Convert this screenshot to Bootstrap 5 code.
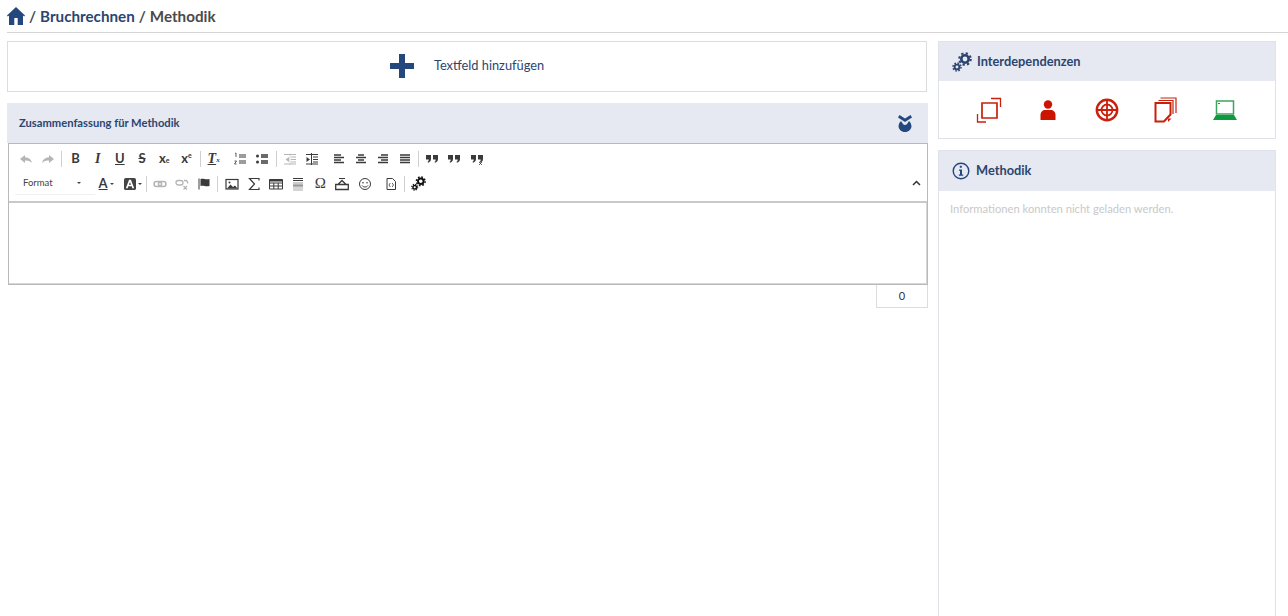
<!DOCTYPE html>
<html lang="de">
  <head>
    <title>Methodik</title>
    <link href="https://cdn.jsdelivr.net/npm/bootstrap@5.3.3/dist/css/bootstrap.min.css" rel="stylesheet" />
    <style>
      html, body { height: 616px; overflow: hidden; }
      body { font-family: Lato, "Liberation Sans", sans-serif; color: #444; background: #fff; }
      .crumb-bar { height: 33px; margin-left: 7px; border-bottom: 1px solid #d5d5d5; font-size: 15.2px; font-weight: 700; gap: 4px; color: #4a4a4a; }
      .crumb-bar a { color: #2b4570; text-decoration: none; }
      .page-wrap { padding: 8px 12px 0 7px; gap: 10px; }
      .left-col { width: 921px; }
      .right-col { width: 338px; }
      .add-box { height: 51px; width: 920px; border: 1px solid #dcdcdc; color: #2b4570; font-size: 12.8px; gap: 20px; padding: 0 0 2px 0; }
      .panel-box { border: 1px solid #dfe2e8; }
      .panel-head { background: #e6e9f1; color: #2b4570; font-weight: 700; }
      .sum-head { height: 40px; padding: 0 16px 0 12px; font-size: 11.2px; margin-top: 11px; }
      .editor-box { border: 1px solid #b9b9b9; margin-left: 1px; width: 920px; }
      .editor-tools { height: 59px; padding: 2px 6px 0 6px; border-bottom: 2px solid #c9c9c9; position: relative; }
      .tool-row { height: 25px; }
      .tool-btn { width: 22.2px; height: 22px; flex: none; color: #3a3a3a; font-size: 13px; line-height: 1; font-weight: 700; }
      .tool-btn svg { display: block; }
      .tool-off { color: #b5b5b5; }
      .tool-sep { width: 1px; height: 16px; background: #d0d0d0; margin: 0 2px; flex: none; }
      .tool-gap { margin-left: 4.5px; }
      .tool-format { width: 80px; height: 22px; font-size: 9.5px; padding-left: 8px; color: #444; flex: none; border-bottom: 1px solid #f0f0f0; }
      .tool-format i { border-left: 2px solid transparent; border-right: 2px solid transparent; border-top: 2px solid #444; margin-left: auto; margin-right: 14px; }
      .tool-caret { border-left: 2px solid transparent; border-right: 2px solid transparent; border-top: 2px solid #444; margin-left: 2px; }
      .tool-collapse { position: absolute; right: 6px; top: 36px; color: #333; }
      .tool-italic { font-family: "Liberation Serif", serif; font-size: 14px; }
      .tool-omega { font-family: "Liberation Serif", serif; font-size: 15px; font-weight: 400; }
      .sub-mark { font-size: 7px; }
      .gear-dark { color: #111; }
      .gear-head { color: #2b4570; }
      .editor-area { height: 81px; box-shadow: inset -1px -1px 0 #d8d8d8; }
      .count-box { width: 52px; height: 23px; border: 1px solid #dcdcdc; border-top: 0; font-size: 11px; color: #333; margin-left: 869px; }
      .side-head { height: 39px; padding-left: 13px; gap: 5px; font-size: 12.8px; }
      .info-head { height: 40px; gap: 6px; }
      .dep-icons { height: 57px; }
      .dep-slot { width: 59px; }
      .info-box { margin-top: 11px; height: 480px; }
      .info-text { font-size: 11.2px; color: #c9c9c9; padding: 10px 11px; }
    </style>
  </head>
  <body>
    <svg width="0" height="0" class="position-absolute">
      <symbol id="i-undo" viewBox="0 0 14 14"><path fill="currentColor" d="M6 3 1 7l5 4V8.5c3 0 5 .6 7 2.500-.6-3.500-3-5.500-7-5.800z"/></symbol>
      <symbol id="i-redo" viewBox="0 0 14 14"><path fill="currentColor" d="m8 3 5 4-5 4V8.500c-3 0-5 .6-7 2.500 .6-3.500 3-5.500 7-5.800z"/></symbol>
      <symbol id="i-ol" viewBox="0 0 14 14"><path fill="none" stroke="currentColor" stroke-width="1.200" d="M6 3h7M6 5h7M6 9h7M6 11h7"/><path fill="none" stroke="currentColor" stroke-width=".8" d="M2 1.500 3 1v4M1.500 9h2l-2 3h2"/></symbol>
      <symbol id="i-ul" viewBox="0 0 14 14"><circle cx="2.500" cy="4" r="1.500" fill="currentColor"/><circle cx="2.500" cy="10" r="1.500" fill="currentColor"/><path stroke="currentColor" stroke-width="1.300" d="M6 3h7M6 5h7M6 9h7M6 11h7"/></symbol>
      <symbol id="i-out" viewBox="0 0 14 14"><path stroke="currentColor" d="M7 1.500V13" opacity=".5"/><path stroke="currentColor" d="M1 2.500h12M8 5h5M8 7.500h5M8 10h5M1 12h12"/><path fill="currentColor" d="M6 5v5L2.500 7.500z"/></symbol>
      <symbol id="i-in" viewBox="0 0 14 14"><path stroke="currentColor" d="M8 5h5M8 7.500h5M8 10h5M1 2.500h12M1 12h12M6.500 1v12"/><path fill="currentColor" d="M1.500 5v5L5 7.500z"/></symbol>
      <symbol id="i-left" viewBox="0 0 14 14"><path stroke="currentColor" stroke-width="1.300" d="M2 3h7M2 5.500h10M2 8h7M2 10.500h10"/></symbol>
      <symbol id="i-center" viewBox="0 0 14 14"><path stroke="currentColor" stroke-width="1.300" d="M4 3h6M2 5.500h10M4 8h6M2 10.500h10"/></symbol>
      <symbol id="i-right" viewBox="0 0 14 14"><path stroke="currentColor" stroke-width="1.300" d="M5 3h7M2 5.500h10M5 8h7M2 10.500h10"/></symbol>
      <symbol id="i-just" viewBox="0 0 14 14"><path stroke="currentColor" stroke-width="1.300" d="M2 3h10M2 5.500h10M2 8h10M2 10.500h10"/></symbol>
      <symbol id="i-quote" viewBox="0 0 14 14"><path fill="currentColor" d="M1 3h5v4c0 2-1.500 3.500-3 3.800l-.5-1c.9-.3 1.200-1.300 1.200-2.300H1zM8 3h5v4c0 2-1.500 3.500-3 3.800l-.5-1c.9-.3 1.200-1.300 1.200-2.300H8z"/></symbol>
      <symbol id="i-quote2" viewBox="0 0 14 14"><path fill="currentColor" d="M1 3h5v4c0 2-1.500 3.500-3 3.800l-.5-1c.9-.3 1.200-1.300 1.200-2.300H1zM8 3h5v4c0 2-1.500 3.500-3 3.800l-.5-1c.9-.3 1.200-1.300 1.200-2.300H8z"/><path stroke="#fff" d="M6.800 3v8"/><path stroke="currentColor" stroke-width=".8" d="m9 10 3 3M12 10l-3 3"/></symbol>
      <symbol id="i-link" viewBox="0 0 14 14"><rect x="1" y="4.500" width="7.500" height="5" rx="2.500" fill="none" stroke="currentColor" stroke-width="1.500"/><rect x="5.500" y="4.500" width="7.500" height="5" rx="2.500" fill="none" stroke="currentColor" stroke-width="1.500"/></symbol>
      <symbol id="i-unlink" viewBox="0 0 14 14"><rect x="1" y="3.500" width="7" height="4.500" rx="2.200" fill="none" stroke="currentColor" stroke-width="1.300"/><path fill="none" stroke="currentColor" stroke-width="1.300" d="M9 3.500h1.500a2.200 2.200 0 0 1 2 3M8.500 9l3.500 3.500M12 9l-3.500 3.500"/></symbol>
      <symbol id="i-flag" viewBox="0 0 14 14"><path fill="currentColor" d="M1.500 1.500h1v11h-1zM3.500 2c3-1 5 1 9 0v7c-4 1-6-1-9 0z"/></symbol>
      <symbol id="i-image" viewBox="0 0 14 14"><rect x="1" y="2.500" width="12" height="9.500" fill="none" stroke="currentColor" stroke-width="1.200"/><path fill="currentColor" d="m2 11.500 3.500-4 2.500 2.500 2-1.500 2.500 3z"/><circle cx="4.500" cy="5.500" r="1" fill="currentColor"/></symbol>
      <symbol id="i-sigma" viewBox="0 0 14 14"><path fill="none" stroke="currentColor" stroke-width="1.200" d="M12 3.500V1.500H2.500L7.500 7l-5 5.500H12v-2"/></symbol>
      <symbol id="i-table" viewBox="0 0 14 14"><path fill="none" stroke="currentColor" d="M.5 2.500h13v9.500H.5zM.5 6h13M.5 9h13M4.800 6v6M9.200 6v6"/><path stroke="currentColor" stroke-width="2" d="M.5 3.500h13"/></symbol>
      <symbol id="i-hr" viewBox="0 0 14 14"><path stroke="currentColor" d="M2 1.500h10M2 3.500h10"/><path stroke="#999" d="M2 6h10"/><path stroke="#999" stroke-width="2.400" d="M2 8.500h10"/><path stroke="#aaa" d="M2 11h10M2 13h10"/></symbol>
      <symbol id="i-box" viewBox="0 0 14 14"><path fill="none" stroke="currentColor" stroke-width="1.300" d="M.7 7.500h12.600v5H.7zM3 7.500l4-4 4 4"/><path stroke="currentColor" d="M4 1.500h6"/></symbol>
      <symbol id="i-smile" viewBox="0 0 14 14"><circle cx="7" cy="7" r="5.500" fill="none" stroke="currentColor"/><circle cx="5" cy="5.700" r=".8" fill="currentColor"/><circle cx="9" cy="5.700" r=".8" fill="currentColor"/><path fill="none" stroke="currentColor" d="M4 8.500c1.500 2 4.500 2 6 0"/></symbol>
      <symbol id="i-src" viewBox="0 0 14 14"><path fill="none" stroke="currentColor" d="M3 1.500h5.500l3 3v8H3z"/><path fill="none" stroke="currentColor" stroke-width=".8" d="M6.300 6 5 8l1.300 2M8.200 6l1.300 2-1.300 2"/></symbol>
      <symbol id="i-gears" viewBox="0 0 20 20">
        <g fill="none" stroke="currentColor">
          <circle cx="13" cy="7" r="3.700" stroke-width="2.600"/>
          <circle cx="13" cy="7" r="5.800" stroke-width="2" stroke-dasharray="2.300 2.250"/>
          <circle cx="5" cy="15" r="2.400" stroke-width="1.900"/>
          <circle cx="5" cy="15" r="4" stroke-width="1.500" stroke-dasharray="1.600 1.540"/>
        </g>
      </symbol>
    </svg>

    <nav class="crumb-bar d-flex align-items-center">
      <a href="#" class="d-flex">
        <svg width="18" height="18" viewBox="0 0 18 18"><path fill="#24477e" d="M9 0 0 8.500l.8.9 1.200-1V18h5.300v-7h3.400v7H16V8.400l1.200 1 .8-.9z"/></svg>
      </a>
      <span>/</span>
      <a href="#">Bruchrechnen</a>
      <span>/</span>
      <span>Methodik</span>
    </nav>

    <main class="page-wrap d-flex align-items-start">
      <section class="left-col">
        <div class="add-box d-flex align-items-center justify-content-center">
          <svg width="24" height="24" viewBox="0 0 24 24"><path fill="#24477e" d="M9 0h6v9h9v6h-9v9H9v-9H0V9h9z"/></svg>
          <span>Textfeld hinzufügen</span>
        </div>
        <div class="panel-head sum-head d-flex align-items-center justify-content-between">
          <span>Zusammenfassung für Methodik</span>
          <svg width="14" height="17" viewBox="0 0 14 17"><path fill="#24477e" d="M1.500 0 7 3.500 12.500 0 14 2.500 7 7 0 2.500zM3 6l2 3a2.500 2.500 0 0 0 4 0l2-3a6.500 6.500 0 0 1 2.500 5c0 3.300-2.800 6-6.500 6S.5 14.300.5 11A6.500 6.500 0 0 1 3 6z"/></svg>
        </div>
        <div class="editor-box">
          <div class="editor-tools">
            <div class="tool-row d-flex align-items-center">
              <span class="tool-btn tool-off d-flex align-items-center justify-content-center"><svg width="14" height="14"><use href="#i-undo"/></svg></span>
              <span class="tool-btn tool-off d-flex align-items-center justify-content-center"><svg width="14" height="14"><use href="#i-redo"/></svg></span>
              <span class="tool-sep"></span>
              <span class="tool-btn d-flex align-items-center justify-content-center">B</span>
              <span class="tool-btn tool-italic d-flex align-items-center justify-content-center fst-italic">I</span>
              <span class="tool-btn d-flex align-items-center justify-content-center text-decoration-underline">U</span>
              <span class="tool-btn d-flex align-items-center justify-content-center text-decoration-line-through">S</span>
              <span class="tool-btn d-flex align-items-center justify-content-center">x<sub class="sub-mark">e</sub></span>
              <span class="tool-btn d-flex align-items-center justify-content-center">x<sup class="sub-mark">e</sup></span>
              <span class="tool-sep"></span>
              <span class="tool-btn tool-italic d-flex align-items-center justify-content-center fst-italic"><span class="text-decoration-underline">T</span><sub class="sub-mark">x</sub></span>
              <span class="tool-btn tool-gap d-flex align-items-center justify-content-center"><svg width="14" height="14"><use href="#i-ol"/></svg></span>
              <span class="tool-btn d-flex align-items-center justify-content-center"><svg width="14" height="14"><use href="#i-ul"/></svg></span>
              <span class="tool-sep"></span>
              <span class="tool-btn tool-off d-flex align-items-center justify-content-center"><svg width="14" height="14"><use href="#i-out"/></svg></span>
              <span class="tool-btn d-flex align-items-center justify-content-center"><svg width="14" height="14"><use href="#i-in"/></svg></span>
              <span class="tool-btn tool-gap d-flex align-items-center justify-content-center"><svg width="14" height="14"><use href="#i-left"/></svg></span>
              <span class="tool-btn d-flex align-items-center justify-content-center"><svg width="14" height="14"><use href="#i-center"/></svg></span>
              <span class="tool-btn d-flex align-items-center justify-content-center"><svg width="14" height="14"><use href="#i-right"/></svg></span>
              <span class="tool-btn d-flex align-items-center justify-content-center"><svg width="14" height="14"><use href="#i-just"/></svg></span>
              <span class="tool-sep"></span>
              <span class="tool-btn d-flex align-items-center justify-content-center"><svg width="14" height="14"><use href="#i-quote"/></svg></span>
              <span class="tool-btn d-flex align-items-center justify-content-center"><svg width="14" height="14"><use href="#i-quote"/></svg></span>
              <span class="tool-btn d-flex align-items-center justify-content-center"><svg width="14" height="14"><use href="#i-quote2"/></svg></span>
            </div>
            <div class="tool-row d-flex align-items-center">
              <span class="tool-format d-flex align-items-center">Format<i></i></span>
              <span class="tool-btn d-flex align-items-center justify-content-center"><span class="text-decoration-underline">A</span><i class="tool-caret"></i></span>
              <span class="tool-btn tool-gap d-flex align-items-center justify-content-center"><svg width="12" height="12" viewBox="0 0 13 13"><rect width="13" height="13" rx="2" fill="#444"/><path fill="#fff" d="M5.500 2h2L11 11H9l-.6-2H4.600L4 11H2zm1 2.500L5.300 7.300h2.400z"/></svg><i class="tool-caret"></i></span>
              <span class="tool-sep"></span>
              <span class="tool-btn tool-off d-flex align-items-center justify-content-center"><svg width="14" height="14"><use href="#i-link"/></svg></span>
              <span class="tool-btn tool-off d-flex align-items-center justify-content-center"><svg width="14" height="14"><use href="#i-unlink"/></svg></span>
              <span class="tool-btn d-flex align-items-center justify-content-center"><svg width="14" height="14"><use href="#i-flag"/></svg></span>
              <span class="tool-sep"></span>
              <span class="tool-btn d-flex align-items-center justify-content-center"><svg width="14" height="14"><use href="#i-image"/></svg></span>
              <span class="tool-btn d-flex align-items-center justify-content-center"><svg width="14" height="14"><use href="#i-sigma"/></svg></span>
              <span class="tool-btn d-flex align-items-center justify-content-center"><svg width="14" height="14"><use href="#i-table"/></svg></span>
              <span class="tool-btn d-flex align-items-center justify-content-center"><svg width="14" height="14"><use href="#i-hr"/></svg></span>
              <span class="tool-btn tool-omega d-flex align-items-center justify-content-center">Ω</span>
              <span class="tool-btn d-flex align-items-center justify-content-center"><svg width="14" height="14"><use href="#i-box"/></svg></span>
              <span class="tool-btn d-flex align-items-center justify-content-center"><svg width="14" height="14"><use href="#i-smile"/></svg></span>
              <span class="tool-btn tool-gap d-flex align-items-center justify-content-center"><svg width="14" height="14"><use href="#i-src"/></svg></span>
              <span class="tool-sep"></span>
              <span class="tool-btn gear-dark d-flex align-items-center justify-content-center"><svg width="15" height="15"><use href="#i-gears"/></svg></span>
            </div>
            <svg class="tool-collapse" width="9" height="6" viewBox="0 0 9 6"><path fill="none" stroke="currentColor" stroke-width="1.500" d="m1 5 3.500-3.500L8 5"/></svg>
          </div>
          <div class="editor-area"></div>
        </div>
        <div class="count-box d-flex align-items-center justify-content-center">0</div>
      </section>

      <aside class="right-col">
        <div class="panel-box">
          <div class="panel-head side-head d-flex align-items-center">
            <svg width="20" height="20" class="gear-head"><use href="#i-gears"/></svg>
            <span>Interdependenzen</span>
          </div>
          <div class="dep-icons d-flex align-items-center justify-content-center">
            <div class="dep-slot d-flex justify-content-center">
              <svg width="26" height="26" viewBox="0 0 26 26"><path fill="none" stroke="#c9200e" stroke-width="1.700" d="M6 6h15v15H6z"/><path fill="none" stroke="#c9200e" stroke-width="1.300" d="M15 1.500h9.500V10M1.500 17v8H10"/></svg>
            </div>
            <div class="dep-slot d-flex justify-content-center">
              <svg width="16" height="20" viewBox="0 0 16 20"><circle cx="8" cy="4.500" r="4.200" fill="#cc1500"/><path fill="#cc1500" d="M.5 20v-5c0-3 2-5 5-5h5c3 0 5 2 5 5v5z"/></svg>
            </div>
            <div class="dep-slot d-flex justify-content-center">
              <svg width="24" height="24" viewBox="0 0 24 24"><g fill="none" stroke="#c9200e"><circle cx="12" cy="12" r="10.200" stroke-width="2.400"/><circle cx="12" cy="12" r="5.500" stroke-width="1.800"/><path stroke-width="1.800" d="M12 3v18M3 12h18"/></g></svg>
            </div>
            <div class="dep-slot d-flex justify-content-center">
              <svg width="24" height="26" viewBox="0 0 24 26"><g fill="none" stroke="#c9200e"><path stroke-width="2" d="M1.500 6h15v11.500l-6.500 7H1.500z"/><path stroke-width="1.200" d="M4.500 3.500H19V17M6.500 1H22v15"/></g><path fill="#c9200e" d="M14 25v-3.500h3.500z"/></svg>
            </div>
            <div class="dep-slot d-flex justify-content-center">
              <svg width="24" height="20" viewBox="0 0 24 20"><rect x="3.500" y="1" width="17" height="13" fill="none" stroke="#3ba55d" stroke-width="1.500"/><path fill="#0e9a3e" d="M3 15h18l3 5H0zM5 3h2v1H5z"/></svg>
            </div>
          </div>
        </div>
        <div class="panel-box info-box">
          <div class="panel-head side-head info-head d-flex align-items-center">
            <svg width="18" height="18" viewBox="0 0 18 18"><circle cx="9" cy="9" r="7.800" fill="none" stroke="#24477e" stroke-width="1.400"/><path fill="#24477e" d="M7.800 3.800h2v2h-2zM7 7.500h3v5h1.200v1.200H6.800v-1.200H8V8.700H7z"/></svg>
            <span>Methodik</span>
          </div>
          <p class="info-text mb-0">Informationen konnten nicht geladen werden.</p>
        </div>
      </aside>
    </main>
  </body>
</html>
